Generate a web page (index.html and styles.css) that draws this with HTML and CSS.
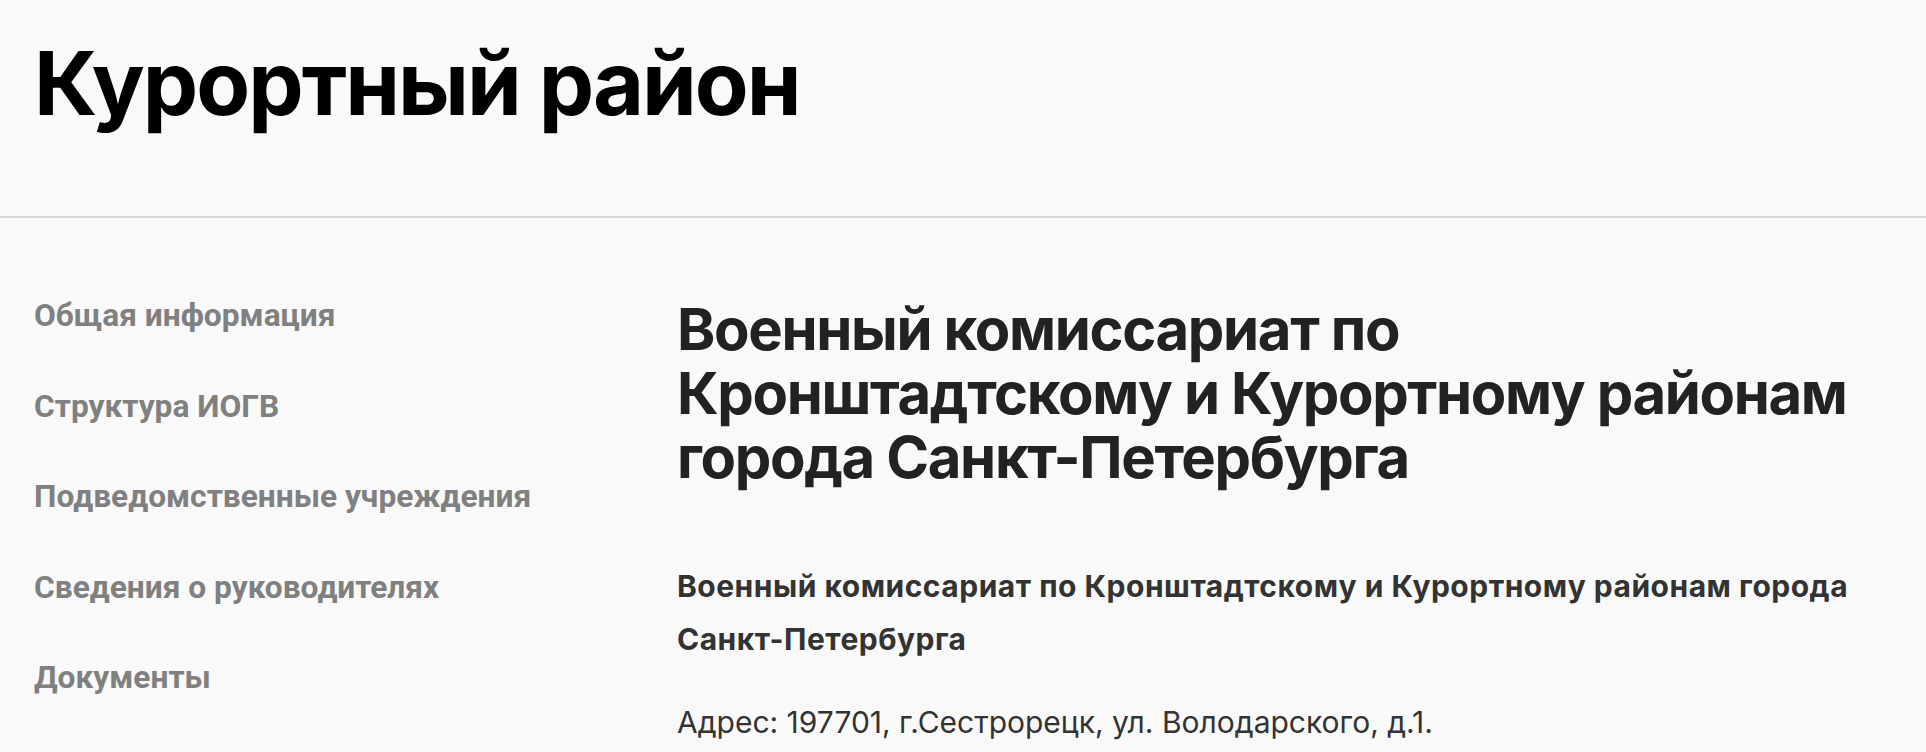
FILE: index.html
```html
<!DOCTYPE html>
<html lang="ru">
<head>
<meta charset="utf-8">
<title>Курортный район</title>
<link rel="stylesheet" href="styles.css">
</head>
<body>
<header class="page-header">
  <h1 class="page-title">Курортный район</h1>
</header>
<main class="layout">
  <nav class="sidebar">
    <ul class="side-menu">
      <li><a href="#">Общая информация</a></li>
      <li><a href="#">Структура ИОГВ</a></li>
      <li><a href="#">Подведомственные учреждения</a></li>
      <li><a href="#">Сведения о руководителях</a></li>
      <li><a href="#">Документы</a></li>
    </ul>
  </nav>
  <section class="content">
    <h2 class="org-title">Военный комиссариат по Кронштадтскому и Курортному районам города Санкт-Петербурга</h2>
    <h3 class="org-subtitle">Военный комиссариат по Кронштадтскому и Курортному районам города Санкт-Петербурга</h3>
    <p class="org-text">Адрес: 197701, г.Сестрорецк, ул. Володарского, д.1.</p>
  </section>
</main>
</body>
</html>
```

FILE: styles.css
```css
* { box-sizing: border-box; }
html, body { margin: 0; padding: 0; }
body {
  background: #f9f9f9;
  font-family: Inter, "Noto Sans", sans-serif;
  color: #222;
  overflow: hidden;
}
.page-header {
  padding: 39px 34px 89px;
  border-bottom: 2px solid #d6dadd;
}
.page-title {
  margin: 0;
  font-family: Inter, sans-serif;
  font-weight: 700;
  font-size: 88px;
  line-height: 88px;
  color: #000;
  letter-spacing: -2px;
}
.layout {
  display: grid;
  grid-template-columns: 643px 1185px;
  padding: 0 34px 0 34px;
}
.sidebar { padding-top: 80px; }
.side-menu {
  list-style: none;
  margin: 0;
  padding: 0;
  display: flex;
  flex-direction: column;
  gap: 54.5px;
}
.side-menu a {
  display: block;
  font-family: Roboto, "Noto Sans", sans-serif;
  font-weight: 700;
  font-size: 31.7px;
  line-height: 36px;
  color: #808080;
  text-decoration: none;
}
.content { padding-top: 79px; }
.org-title {
  margin: 0;
  font-weight: 700;
  font-size: 58px;
  line-height: 64px;
  color: #222;
  letter-spacing: -1.35px;
}
.org-subtitle {
  margin: 71px 0 0;
  font-weight: 700;
  font-size: 30px;
  line-height: 53px;
  color: #333;
  letter-spacing: 0.5px;
}
.org-text {
  margin: 36px 0 0;
  font-weight: 400;
  font-size: 30px;
  line-height: 40px;
  color: #333;
}
```
